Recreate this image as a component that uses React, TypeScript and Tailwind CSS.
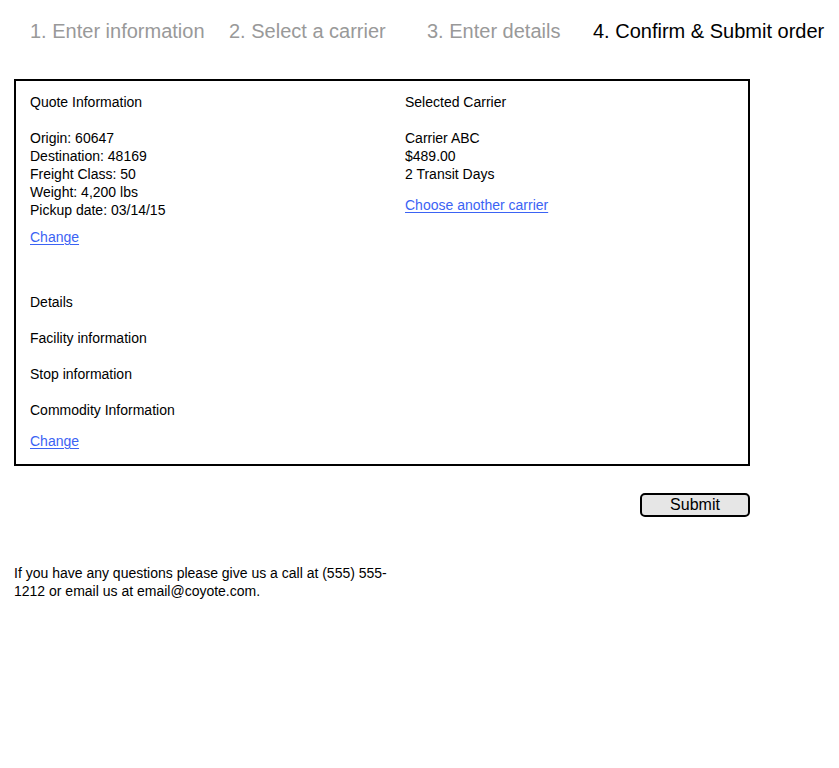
import React from "react";

const linkCls = "text-[#3b63f4] underline underline-offset-[2px] decoration-1";

export default function App() {
  return (
    <div
      className="min-h-[768px] w-[839px] bg-white text-black"
      style={{ fontFamily: '"Liberation Sans", Arial, sans-serif' }}
    >
      {/* Steps */}
      <div className="flex pt-[19px] pl-[30px] text-[20px] leading-6 whitespace-nowrap">
        <div className="w-[199px] text-[#999999]">1. Enter information</div>
        <div className="w-[198px] text-[#999999]">2. Select a carrier</div>
        <div className="w-[166px] text-[#999999]">3. Enter details</div>
        <div className="text-black">4. Confirm &amp; Submit order</div>
      </div>

      <div className="ml-[14px] w-[736px]">
        {/* Box */}
        <div className="mt-[36px] h-[387px] border-2 border-black pt-[12px] pl-[14px] pb-[14px] text-[14px] leading-[18px]">
          <div className="flex">
            <div className="w-[375px]">
              <div>Quote Information</div>
              <div className="mt-[18px]">
                <div>Origin: 60647</div>
                <div>Destination: 48169</div>
                <div>Freight Class: 50</div>
                <div>Weight: 4,200 lbs</div>
                <div>Pickup date: 03/14/15</div>
              </div>
              <div className="mt-[9px]">
                <a href="#" className={linkCls}>Change</a>
              </div>
              <div className="mt-[47px]">Details</div>
              <div className="mt-[18px]">Facility information</div>
              <div className="mt-[18px]">Stop information</div>
              <div className="mt-[18px]">Commodity Information</div>
              <div className="mt-[13px]">
                <a href="#" className={linkCls}>Change</a>
              </div>
            </div>
            <div>
              <div>Selected Carrier</div>
              <div className="mt-[18px]">
                <div>Carrier ABC</div>
                <div>$489.00</div>
                <div>2 Transit Days</div>
              </div>
              <div className="mt-[13px]">
                <a href="#" className={linkCls}>Choose another carrier</a>
              </div>
            </div>
          </div>
        </div>

        {/* Submit */}
        <div className="mt-[27px] flex justify-end">
          <button
            type="button"
            className="h-[24px] w-[110px] rounded-[5px] border-2 border-black bg-[#e6e6e6] text-[16px] leading-[18px] text-black"
          >
            Submit
          </button>
        </div>
      </div>

      {/* Footer */}
      <div className="ml-[14px] mt-[47px] w-[380px] text-[14px] leading-[18px]">
        If you have any questions please give us a call at (555) 555-1212 or email us at email@coyote.com.
      </div>
    </div>
  );
}
